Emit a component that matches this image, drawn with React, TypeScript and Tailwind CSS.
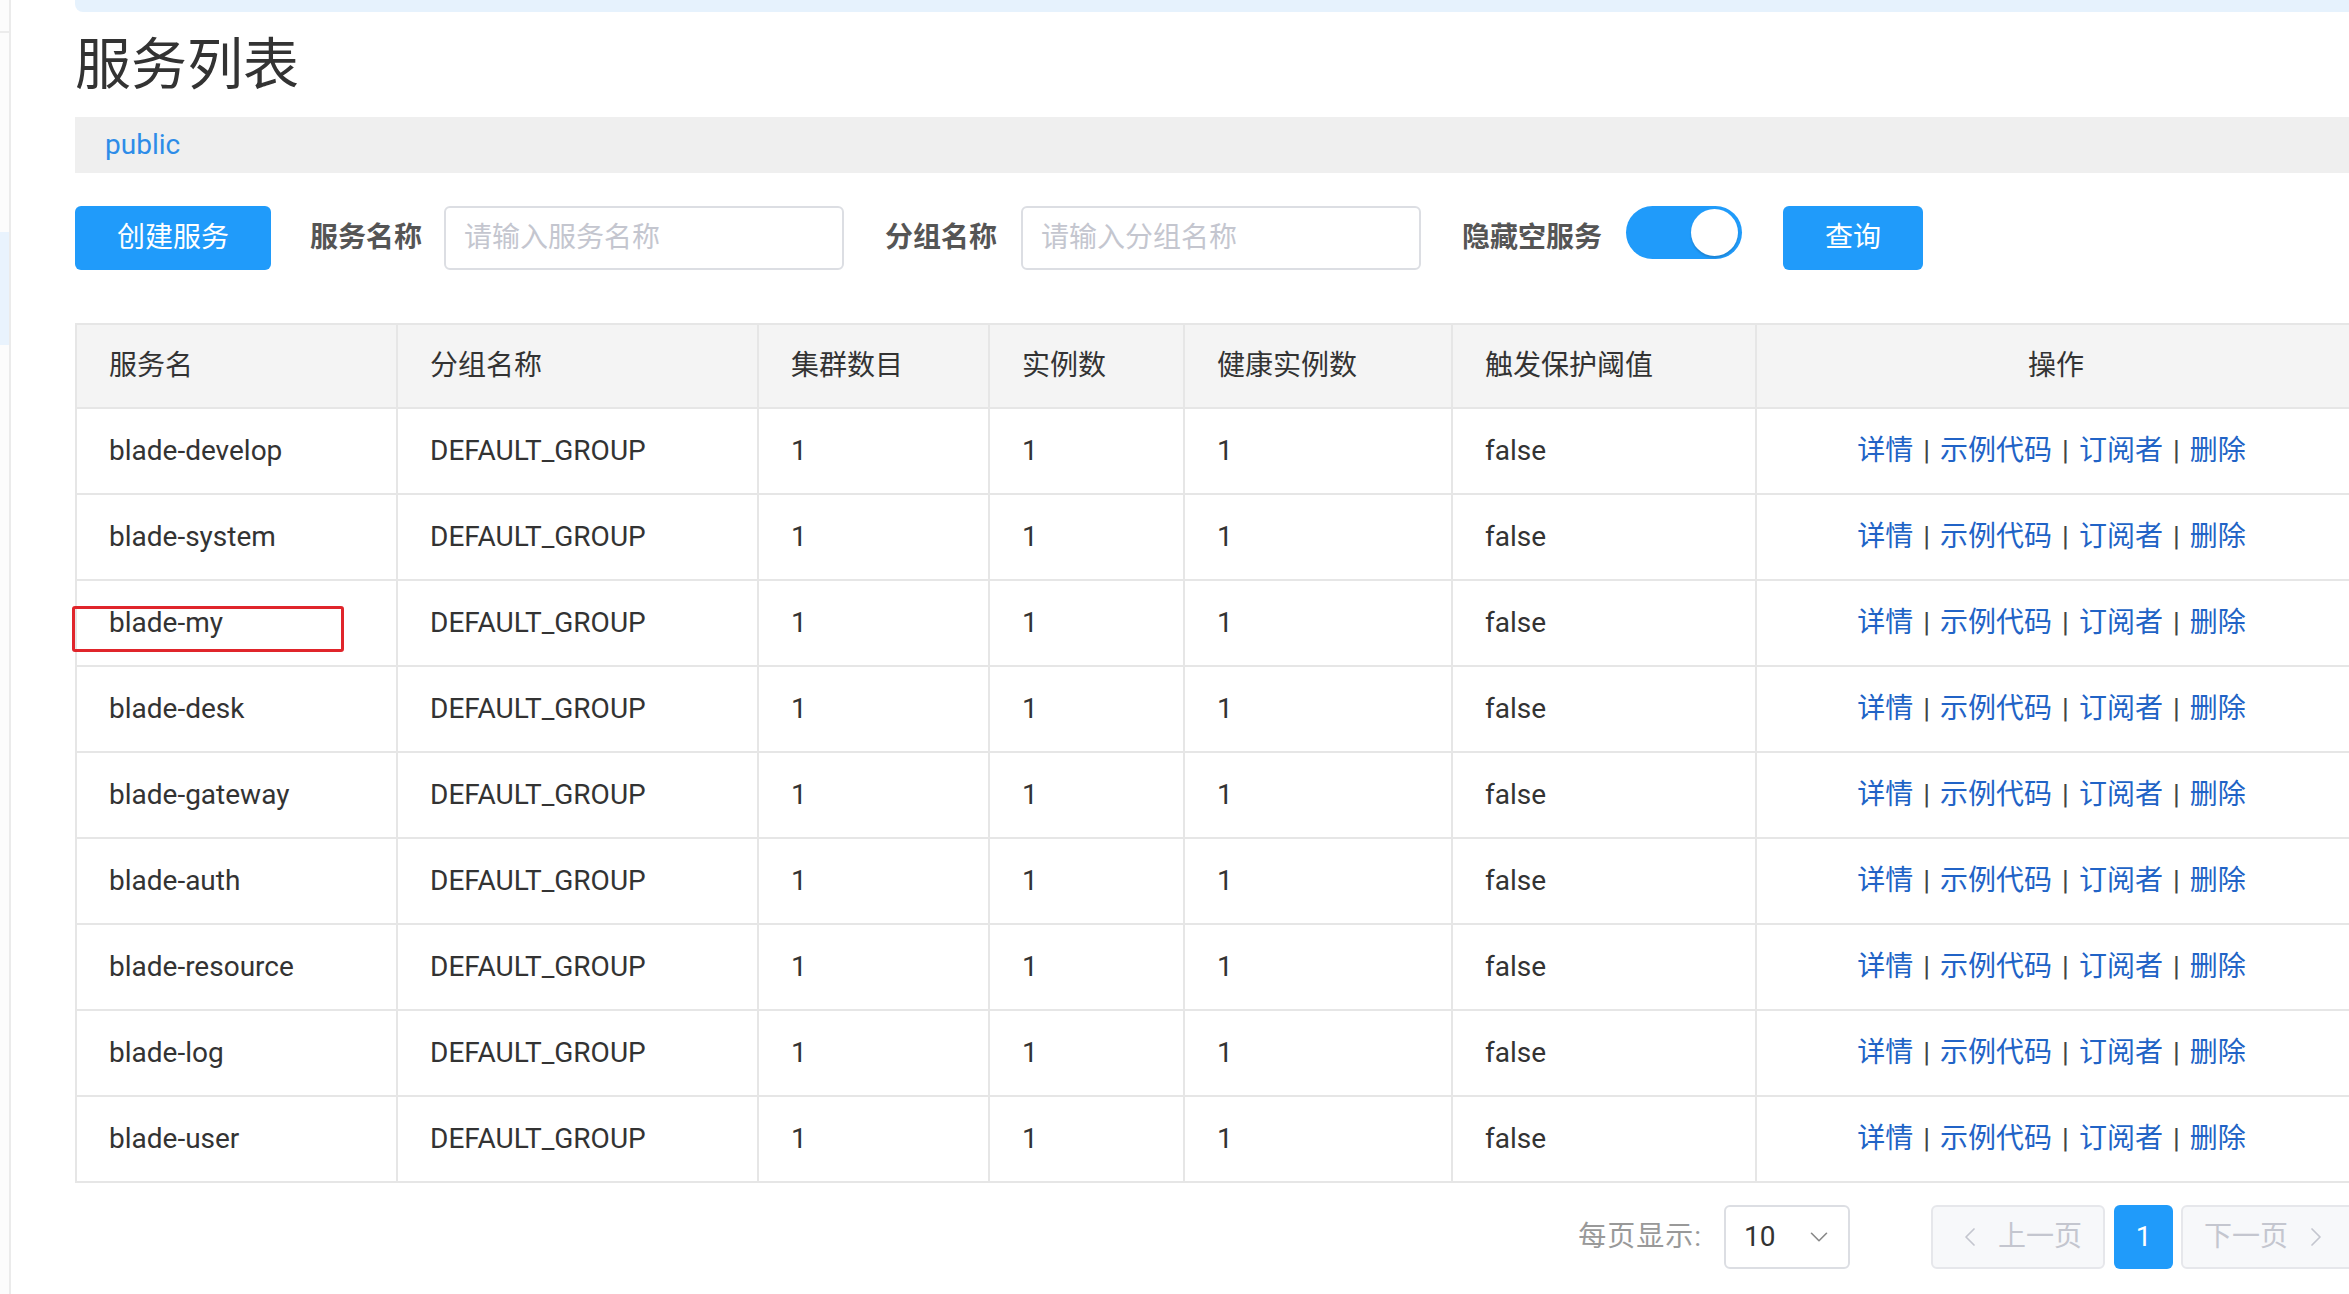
import { ChevronDown, ChevronLeft, ChevronRight } from "lucide-react";

const font = "font-['Roboto','Noto_Sans_CJK_SC',sans-serif]";

const services = [
  "blade-develop",
  "blade-system",
  "blade-my",
  "blade-desk",
  "blade-gateway",
  "blade-auth",
  "blade-resource",
  "blade-log",
  "blade-user",
];

const cols = "grid grid-cols-[321px_361px_231px_195px_268px_304px_600px]";
const cell = "flex items-center pl-[32px] border-r-2 border-[#e6e6e6]";

const Sidebar = () => (
  <div className="w-[11px] shrink-0 border-r-2 border-[#ebebeb] bg-[#fcfcfc] flex flex-col">
    <div className="h-[33px] border-b-2 border-[#ececec]" />
    <div className="h-[199px]" />
    <div className="h-[113px] bg-[#e9f3fd]" />
  </div>
);

const Toolbar = () => (
  <div className="flex h-[64px] items-center">
    <button className="w-[196px] h-[64px] rounded-[6px] bg-[#209bfa] text-white text-[28px]">
      创建服务
    </button>
    <span className="ml-[39px] text-[28px] font-bold text-[#555]">服务名称</span>
    <div className="ml-[22px] w-[400px] h-[64px] rounded-[6px] border-2 border-[#dcdee3] flex items-center pl-[18px] text-[28px] text-[#c4c6cf]">
      请输入服务名称
    </div>
    <span className="ml-[41px] text-[28px] font-bold text-[#555]">分组名称</span>
    <div className="ml-[24px] w-[400px] h-[64px] rounded-[6px] border-2 border-[#dcdee3] flex items-center pl-[18px] text-[28px] text-[#c4c6cf]">
      请输入分组名称
    </div>
    <span className="ml-[41px] text-[28px] font-bold text-[#555]">隐藏空服务</span>
    <div className="ml-[24px] self-start w-[116px] h-[53px] rounded-full bg-[#209bfa] flex items-center justify-end pr-[4px]">
      <div className="w-[47px] h-[47px] rounded-full bg-white shadow-[0_2px_2px_rgba(0,0,0,0.15)]" />
    </div>
    <button className="ml-[41px] w-[140px] h-[64px] rounded-[6px] bg-[#209bfa] text-white text-[28px]">
      查询
    </button>
  </div>
);

const Ops = () => (
  <span className="text-[28px]">
    <a className="text-[#2163c6]">详情</a>
    <span className="text-[#444] px-[10px]">|</span>
    <a className="text-[#2163c6]">示例代码</a>
    <span className="text-[#444] px-[10px]">|</span>
    <a className="text-[#2163c6]">订阅者</a>
    <span className="text-[#444] px-[10px]">|</span>
    <a className="text-[#2163c6]">删除</a>
  </span>
);

const Table = () => (
  <div className="mt-[53px] border-t-2 border-l-2 border-[#e6e6e6] text-[28px] text-[#333]">
    <div className={`${cols} h-[84px] bg-[#f4f4f4] border-b-2 border-[#e6e6e6]`}>
      <div className={cell}>服务名</div>
      <div className={cell}>分组名称</div>
      <div className={cell}>集群数目</div>
      <div className={cell}>实例数</div>
      <div className={cell}>健康实例数</div>
      <div className={cell}>触发保护阈值</div>
      <div className="flex items-center justify-center border-r-2 border-[#e6e6e6]">操作</div>
    </div>
    {services.map((name) => (
      <div key={name} className={`${cols} h-[86px] border-b-2 border-[#e6e6e6]`}>
        <div className={`${cell} relative`}>
          {name}
          {name === "blade-my" && (
            <div className="absolute left-[-5px] top-[25px] w-[272px] h-[46px] border-[3px] border-[#e0252b] rounded-[3px]" />
          )}
        </div>
        <div className={cell}>DEFAULT_GROUP</div>
        <div className={cell}>1</div>
        <div className={cell}>1</div>
        <div className={cell}>1</div>
        <div className={cell}>false</div>
        <div className="flex items-center justify-center pr-[9px] border-r-2 border-[#e6e6e6]">
          <Ops />
        </div>
      </div>
    ))}
  </div>
);

const Pagination = () => (
  <div className="mt-[22px] flex h-[64px] items-center justify-end text-[28px]">
    <span className="text-[#999] tracking-[1px]">每页显示:</span>
    <div className="ml-[22px] w-[126px] h-[64px] rounded-[6px] border-2 border-[#dcdee3] flex items-center justify-between pl-[18px] pr-[14px] text-[#333]">
      <span>10</span>
      <ChevronDown size={30} strokeWidth={1.3} className="text-[#888]" />
    </div>
    <div className="ml-[81px] w-[174px] h-[64px] rounded-[6px] border-2 border-[#e6e7eb] bg-[#f7f8fa] flex items-center justify-center gap-[12px] text-[#c4c6cf]">
      <ChevronLeft size={32} strokeWidth={1.3} />
      <span>上一页</span>
    </div>
    <div className="ml-[9px] w-[59px] h-[64px] rounded-[6px] bg-[#209bfa] text-white flex items-center justify-center">
      1
    </div>
    <div className="ml-[8px] w-[174px] h-[64px] rounded-[6px] border-2 border-[#e6e7eb] bg-[#f7f8fa] flex items-center justify-center gap-[12px] text-[#c4c6cf]">
      <span>下一页</span>
      <ChevronRight size={32} strokeWidth={1.3} />
    </div>
  </div>
);

export default function App() {
  return (
    <div className={`${font} flex w-screen h-screen overflow-hidden bg-white`}>
      <Sidebar />
      <div className="ml-[64px] w-[2280px] shrink-0 flex flex-col">
        <div className="h-[12px] bg-[#e6f2fd] rounded-bl-[8px]" />
        <div className="h-[105px] flex items-center text-[56px] text-[#333] leading-none">
          服务列表
        </div>
        <div className="h-[56px] bg-[#efefef] pl-[30px] flex items-center text-[28px] text-[#2d8ce8]">
          public
        </div>
        <div className="mt-[33px]">
          <Toolbar />
        </div>
        <Table />
        <Pagination />
      </div>
    </div>
  );
}
